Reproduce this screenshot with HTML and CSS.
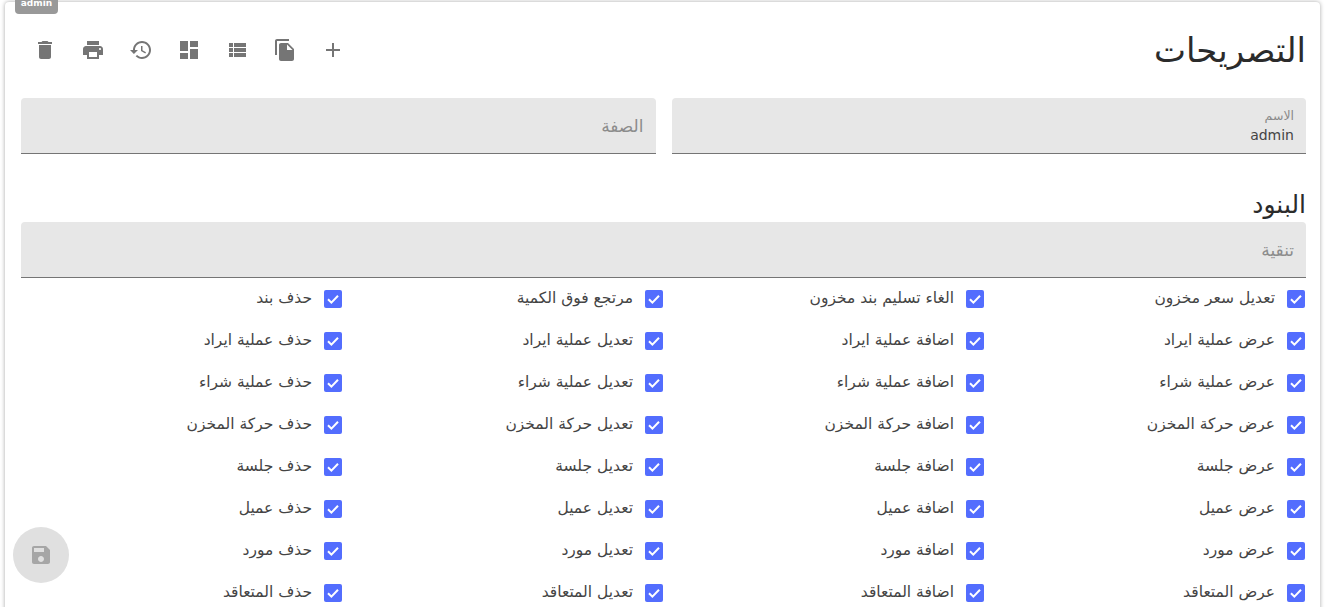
FILE: index.html
```html
<!DOCTYPE html>
<html lang="ar" dir="rtl">
<head>
<meta charset="utf-8">
<title>التصريحات</title>
<link rel="stylesheet" href="styles.css">
</head>
<body>
<main class="card">
  <span class="badge">admin</span>
  <header class="top">
    <h1 class="title">التصريحات</h1>
    <div class="tools">
      <button class="tool"><svg viewBox="0 0 24 24"><path d="M19 13h-6v6h-2v-6H5v-2h6V5h2v6h6v2z"/></svg></button>
      <button class="tool"><svg viewBox="0 0 24 24"><path d="M16 1H4c-1.1 0-2 .9-2 2v14h2V3h12V1zm-1 4l6 6v10c0 1.1-.9 2-2 2H7.99C6.89 23 6 22.1 6 21l.01-14c0-1.1.89-2 1.99-2h7zm-1 7h5.5L14 6.5V12z"/></svg></button>
      <button class="tool"><svg viewBox="0 0 24 24"><path d="M4 14h4v-4H4v4zm0 5h4v-4H4v4zM4 9h4V5H4v4zm5 5h12v-4H9v4zm0 5h12v-4H9v4zM9 5v4h12V5H9z"/></svg></button>
      <button class="tool"><svg viewBox="0 0 24 24"><path d="M3 13h8V3H3v10zm0 8h8v-6H3v6zm10 0h8V11h-8v10zm0-18v6h8V3h-8z"/></svg></button>
      <button class="tool"><svg viewBox="0 0 24 24"><path d="M13 3c-4.97 0-9 4.03-9 9H1l3.89 3.89.07.14L9 12H6c0-3.87 3.13-7 7-7s7 3.13 7 7-3.13 7-7 7c-1.93 0-3.68-.79-4.94-2.06l-1.42 1.42C8.27 19.99 10.51 21 13 21c4.97 0 9-4.03 9-9s-4.03-9-9-9zm-1 5v5l4.28 2.54.72-1.21-3.5-2.08V8H12z"/></svg></button>
      <button class="tool"><svg viewBox="0 0 24 24"><path d="M19 8H5c-1.66 0-3 1.34-3 3v6h4v4h12v-4h4v-6c0-1.66-1.34-3-3-3zm-3 11H8v-5h8v5zm3-7c-.55 0-1-.45-1-1s.45-1 1-1 1 .45 1 1-.45 1-1 1zm-1-9H6v4h12V3z"/></svg></button>
      <button class="tool"><svg viewBox="0 0 24 24"><path d="M6 19c0 1.1.9 2 2 2h8c1.1 0 2-.9 2-2V7H6v12zM19 4h-3.5l-1-1h-5l-1 1H5v2h14V4z"/></svg></button>
    </div>
  </header>

  <section class="fields">
    <div class="field">
      <span class="field-label">الاسم</span>
      <span class="field-value">admin</span>
    </div>
    <div class="field field-empty"><span class="placeholder">الصفة</span></div>
  </section>

  <h2 class="section-title">البنود</h2>
  <div class="field field-empty field-filter"><span class="placeholder">تنقية</span></div>

  <ul class="perms">
    <li class="perm"><span class="check"><svg viewBox="0 0 18 18"><path d="M4 9.2l3.4 3.4L14 5.8"/></svg></span>تعديل سعر مخزون</li>
    <li class="perm"><span class="check"><svg viewBox="0 0 18 18"><path d="M4 9.2l3.4 3.4L14 5.8"/></svg></span>الغاء تسليم بند مخزون</li>
    <li class="perm"><span class="check"><svg viewBox="0 0 18 18"><path d="M4 9.2l3.4 3.4L14 5.8"/></svg></span>مرتجع فوق الكمية</li>
    <li class="perm"><span class="check"><svg viewBox="0 0 18 18"><path d="M4 9.2l3.4 3.4L14 5.8"/></svg></span>حذف بند</li>

    <li class="perm"><span class="check"><svg viewBox="0 0 18 18"><path d="M4 9.2l3.4 3.4L14 5.8"/></svg></span>عرض عملية ايراد</li>
    <li class="perm"><span class="check"><svg viewBox="0 0 18 18"><path d="M4 9.2l3.4 3.4L14 5.8"/></svg></span>اضافة عملية ايراد</li>
    <li class="perm"><span class="check"><svg viewBox="0 0 18 18"><path d="M4 9.2l3.4 3.4L14 5.8"/></svg></span>تعديل عملية ايراد</li>
    <li class="perm"><span class="check"><svg viewBox="0 0 18 18"><path d="M4 9.2l3.4 3.4L14 5.8"/></svg></span>حذف عملية ايراد</li>

    <li class="perm"><span class="check"><svg viewBox="0 0 18 18"><path d="M4 9.2l3.4 3.4L14 5.8"/></svg></span>عرض عملية شراء</li>
    <li class="perm"><span class="check"><svg viewBox="0 0 18 18"><path d="M4 9.2l3.4 3.4L14 5.8"/></svg></span>اضافة عملية شراء</li>
    <li class="perm"><span class="check"><svg viewBox="0 0 18 18"><path d="M4 9.2l3.4 3.4L14 5.8"/></svg></span>تعديل عملية شراء</li>
    <li class="perm"><span class="check"><svg viewBox="0 0 18 18"><path d="M4 9.2l3.4 3.4L14 5.8"/></svg></span>حذف عملية شراء</li>

    <li class="perm"><span class="check"><svg viewBox="0 0 18 18"><path d="M4 9.2l3.4 3.4L14 5.8"/></svg></span>عرض حركة المخزن</li>
    <li class="perm"><span class="check"><svg viewBox="0 0 18 18"><path d="M4 9.2l3.4 3.4L14 5.8"/></svg></span>اضافة حركة المخزن</li>
    <li class="perm"><span class="check"><svg viewBox="0 0 18 18"><path d="M4 9.2l3.4 3.4L14 5.8"/></svg></span>تعديل حركة المخزن</li>
    <li class="perm"><span class="check"><svg viewBox="0 0 18 18"><path d="M4 9.2l3.4 3.4L14 5.8"/></svg></span>حذف حركة المخزن</li>

    <li class="perm"><span class="check"><svg viewBox="0 0 18 18"><path d="M4 9.2l3.4 3.4L14 5.8"/></svg></span>عرض جلسة</li>
    <li class="perm"><span class="check"><svg viewBox="0 0 18 18"><path d="M4 9.2l3.4 3.4L14 5.8"/></svg></span>اضافة جلسة</li>
    <li class="perm"><span class="check"><svg viewBox="0 0 18 18"><path d="M4 9.2l3.4 3.4L14 5.8"/></svg></span>تعديل جلسة</li>
    <li class="perm"><span class="check"><svg viewBox="0 0 18 18"><path d="M4 9.2l3.4 3.4L14 5.8"/></svg></span>حذف جلسة</li>

    <li class="perm"><span class="check"><svg viewBox="0 0 18 18"><path d="M4 9.2l3.4 3.4L14 5.8"/></svg></span>عرض عميل</li>
    <li class="perm"><span class="check"><svg viewBox="0 0 18 18"><path d="M4 9.2l3.4 3.4L14 5.8"/></svg></span>اضافة عميل</li>
    <li class="perm"><span class="check"><svg viewBox="0 0 18 18"><path d="M4 9.2l3.4 3.4L14 5.8"/></svg></span>تعديل عميل</li>
    <li class="perm"><span class="check"><svg viewBox="0 0 18 18"><path d="M4 9.2l3.4 3.4L14 5.8"/></svg></span>حذف عميل</li>

    <li class="perm"><span class="check"><svg viewBox="0 0 18 18"><path d="M4 9.2l3.4 3.4L14 5.8"/></svg></span>عرض مورد</li>
    <li class="perm"><span class="check"><svg viewBox="0 0 18 18"><path d="M4 9.2l3.4 3.4L14 5.8"/></svg></span>اضافة مورد</li>
    <li class="perm"><span class="check"><svg viewBox="0 0 18 18"><path d="M4 9.2l3.4 3.4L14 5.8"/></svg></span>تعديل مورد</li>
    <li class="perm"><span class="check"><svg viewBox="0 0 18 18"><path d="M4 9.2l3.4 3.4L14 5.8"/></svg></span>حذف مورد</li>

    <li class="perm"><span class="check"><svg viewBox="0 0 18 18"><path d="M4 9.2l3.4 3.4L14 5.8"/></svg></span>عرض المتعاقد</li>
    <li class="perm"><span class="check"><svg viewBox="0 0 18 18"><path d="M4 9.2l3.4 3.4L14 5.8"/></svg></span>اضافة المتعاقد</li>
    <li class="perm"><span class="check"><svg viewBox="0 0 18 18"><path d="M4 9.2l3.4 3.4L14 5.8"/></svg></span>تعديل المتعاقد</li>
    <li class="perm"><span class="check"><svg viewBox="0 0 18 18"><path d="M4 9.2l3.4 3.4L14 5.8"/></svg></span>حذف المتعاقد</li>
  </ul>
</main>
<button class="fab"><svg viewBox="0 0 24 24"><path d="M17 3H5c-1.11 0-2 .9-2 2v14c0 1.1.89 2 2 2h14c1.1 0 2-.9 2-2V7l-4-4zm-5 16c-1.66 0-3-1.34-3-3s1.34-3 3-3 3 1.34 3 3-1.34 3-3 3zm3-10H5V5h10v4z"/></svg></button>
</body>
</html>
```
FILE: styles.css
```css
* { box-sizing: border-box; }
html, body { height: 100%; }
body {
  margin: 0;
  padding: 2px 5px 0;
  height: 607px;
  overflow: hidden;
  background: #fff;
  font-family: "DejaVu Sans", sans-serif;
  color: #333;
}
.card {
  position: relative;
  background: #fff;
  border-radius: 4px 4px 0 0;
  box-shadow: 0 0 4px rgba(0,0,0,.35);
  padding: 0 14px 0 16px;
  height: 700px;
}
.badge {
  position: absolute;
  left: 10px;
  top: -4px;
  width: 43px;
  height: 16px;
  border-radius: 0 0 4px 4px;
  background: #999;
  color: #fff;
  font-size: 9px;
  line-height: 11px;
  font-weight: 700;
  text-align: center;
  direction: ltr;
}
.top {
  display: flex;
  justify-content: space-between;
  align-items: center;
  height: 96px;
}
.title {
  margin: 0;
  font-size: 34px;
  font-weight: 400;
  line-height: 44px;
  color: #2b2b2b;
}
.tools { display: flex; }
.tool {
  width: 48px;
  height: 48px;
  padding: 12px;
  border: 0;
  background: none;
}
.tool svg { display: block; width: 24px; height: 24px; fill: #757575; }
.fields {
  display: grid;
  grid-template-columns: 1fr 1fr;
  gap: 16px;
}
.field {
  position: relative;
  height: 56px;
  background: #e7e7e7;
  border-radius: 4px 4px 0 0;
  border-bottom: 1px solid #757575;
  padding: 0 12px;
  display: flex;
  flex-direction: column;
  justify-content: center;
}
.field-label { font-size: 12.5px; line-height: 14px; color: #8a8a8a; margin-top: 1px; margin-bottom: 3px; }
.field-value { font-size: 14px; line-height: 18px; color: #444; text-align: right; }
.placeholder { font-size: 17px; line-height: 22px; color: #8c8c8c; }
.section-title {
  margin: 36px 0 0;
  height: 32px;
  font-size: 25px;
  line-height: 30px;
  font-weight: 400;
  color: #2b2b2b;
}
.perms {
  list-style: none;
  margin: 0;
  padding: 0 1px 0 0;
  display: grid;
  grid-template-columns: repeat(4, 1fr);
  grid-auto-rows: 42px;
}
.perm {
  display: flex;
  align-items: center;
  gap: 12px;
  padding-bottom: 2px;
  font-size: 15.5px;
  color: #444;
}
.check {
  width: 18px;
  height: 18px;
  margin-top: 2px;
  border-radius: 2px;
  background: #536dfe;
  flex: none;
}
.check svg { display: block; width: 18px; height: 18px; fill: none; stroke: #fff; stroke-width: 2; }
.fab {
  position: fixed;
  left: 13px;
  top: 527px;
  width: 56px;
  height: 56px;
  padding: 16px;
  border: 0;
  border-radius: 50%;
  background: #e0e0e0;
}
.fab svg { display: block; width: 24px; height: 24px; fill: #a6a6a6; }
```
